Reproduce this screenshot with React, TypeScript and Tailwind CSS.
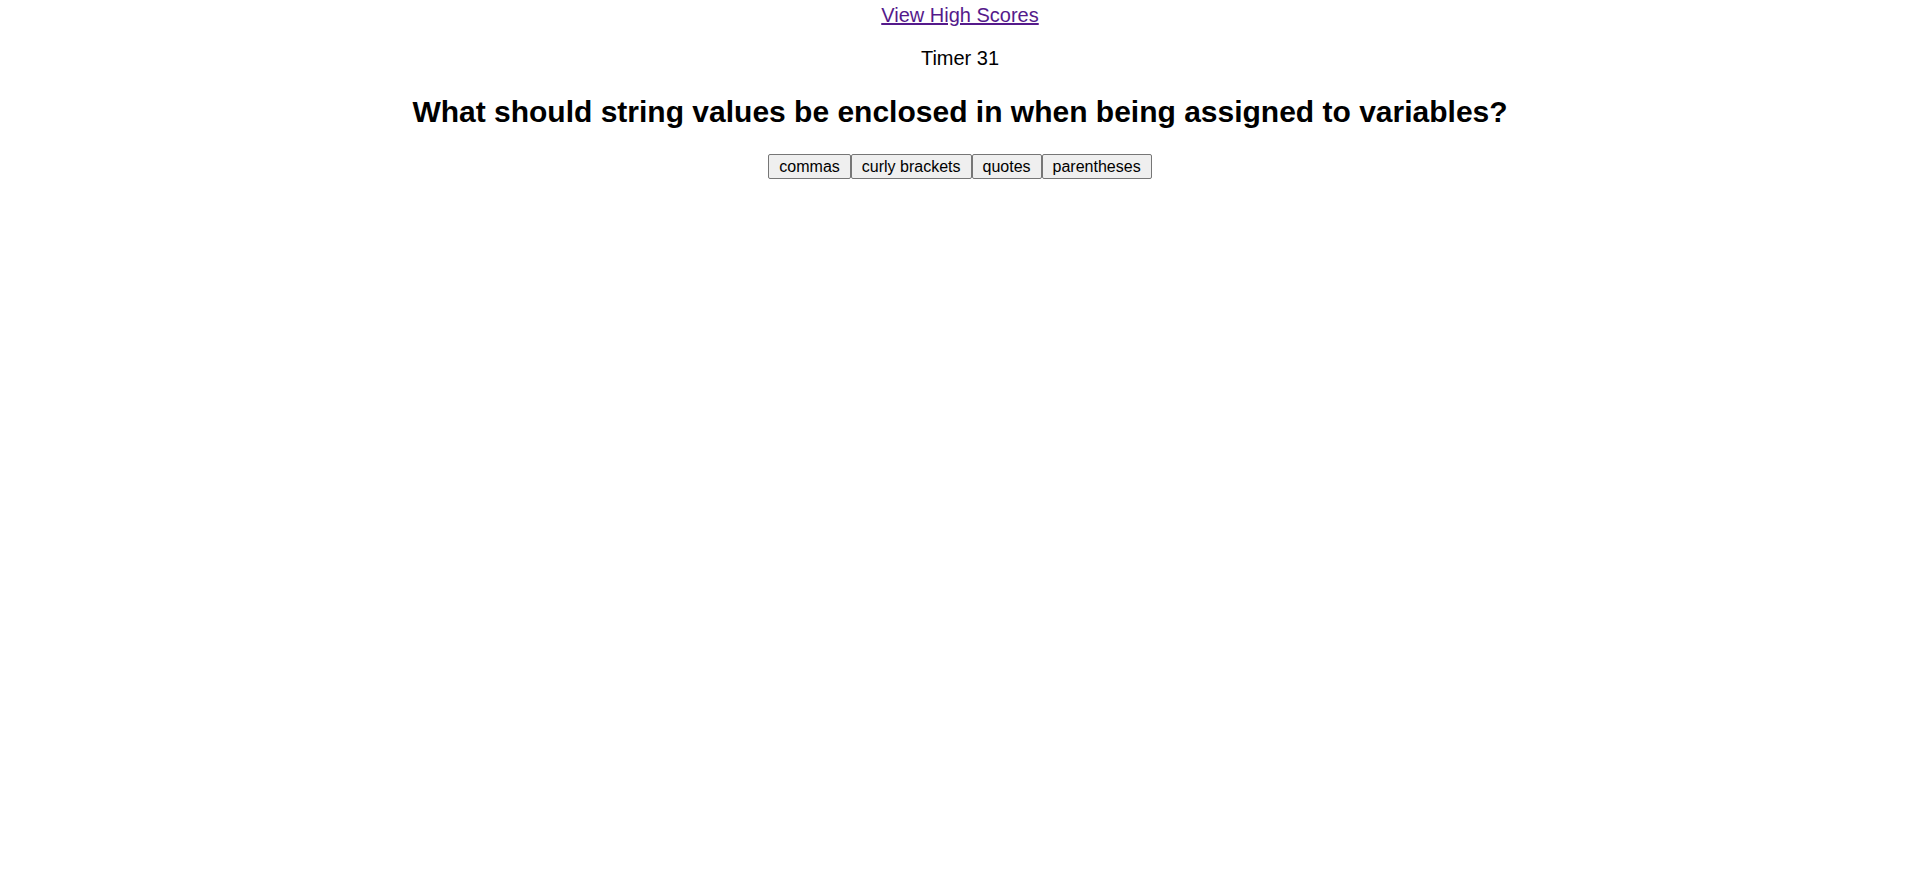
export default function App() {
  const answers = ['commas', 'curly brackets', 'quotes', 'parentheses'];

  return (
    <div className="min-h-screen bg-white text-black text-center font-['Liberation_Sans',Arial,sans-serif] text-[20px]">
      <header className="h-[30px] leading-[30px]">
        <a href="#" className="text-[#551a8b] underline">
          View High Scores
        </a>
      </header>

      <main>
        <p className="mt-[17px] mb-[25px] leading-[23px]">Timer 31</p>
        <h2 className="text-[30px] leading-[34px] font-bold mb-[25px]">
          What should string values be enclosed in when being assigned to variables?
        </h2>
        <div className="flex justify-center">
          {answers.map((a) => (
            <button
              key={a}
              className="px-[10px] py-[2px] text-[16px] leading-[19px] bg-[#efefef] border border-[#767676] rounded-[2px] hover:bg-[#e5e5e5]"
            >
              {a}
            </button>
          ))}
        </div>
      </main>
    </div>
  );
}
